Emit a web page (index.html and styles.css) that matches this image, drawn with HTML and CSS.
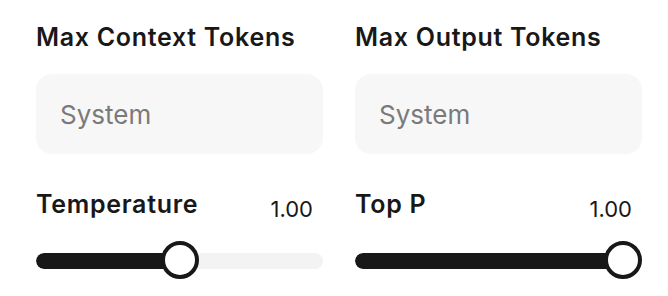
FILE: index.html
```html
<!DOCTYPE html>
<html lang="en">
<head>
    <meta charset="UTF-8">
    <meta name="viewport" content="width=device-width, initial-scale=1.0">
    <title>Model Settings</title>
    <link rel="stylesheet" href="styles.css">
</head>
<body>
    <div class="settings">
        <div class="field">
            <label class="field-label" for="max-context">Max Context Tokens</label>
            <input id="max-context" class="text-input" type="text" placeholder="System">
        </div>
        <div class="field">
            <label class="field-label" for="max-output">Max Output Tokens</label>
            <input id="max-output" class="text-input" type="text" placeholder="System">
        </div>

        <div class="field">
            <div class="slider-head">
                <span class="field-label">Temperature</span>
                <span class="slider-value">1.00</span>
            </div>
            <div class="slider">
                <div class="slider-track">
                    <div class="slider-fill" style="width: calc((100% - 38px) * 0.5 + 19px)"></div>
                </div>
                <div class="slider-thumb" style="left: calc((100% - 38px) * 0.5)"></div>
            </div>
        </div>
        <div class="field">
            <div class="slider-head">
                <span class="field-label">Top P</span>
                <span class="slider-value">1.00</span>
            </div>
            <div class="slider">
                <div class="slider-track">
                    <div class="slider-fill" style="width: calc((100% - 38px) * 1 + 19px)"></div>
                </div>
                <div class="slider-thumb" style="left: calc((100% - 38px) * 1)"></div>
            </div>
        </div>
    </div>
</body>
</html>
```

FILE: styles.css
```css
body {
    margin: 0;
    font-family: Inter, "Noto Sans", sans-serif;
    color: #181818;
    background: #fff;
}
.settings {
    display: grid;
    grid-template-columns: 287px 287px;
    column-gap: 32px;
    row-gap: 36px;
    padding: 23px 0 0 36px;
}
.field {
    display: flex;
    flex-direction: column;
}
.field-label {
    display: block;
    font-size: 25px;
    line-height: 29px;
    font-weight: 600;
    letter-spacing: 0.7px;
}
.text-input {
    margin-top: 22px;
    height: 80px;
    box-sizing: border-box;
    border: none;
    border-radius: 16px;
    background: #f7f7f7;
    padding: 0 24px;
    font-family: inherit;
    font-size: 26px;
    color: #181818;
    outline: none;
}
.text-input::placeholder {
    color: #7a7a7a;
}
.slider-head {
    display: flex;
    justify-content: space-between;
    align-items: flex-start;
}
.slider-value {
    margin-top: 6px;
    padding-right: 10px;
    font-size: 22px;
    line-height: 27px;
    font-weight: 400;
}
.slider {
    position: relative;
    height: 38px;
    margin-top: 18px;
}
.slider-track {
    position: relative;
    top: 12px;
    height: 16px;
    border-radius: 8px;
    background: #f3f3f3;
    overflow: hidden;
}
.slider-fill {
    height: 100%;
    background: #181818;
    border-radius: 8px;
}
.slider-thumb {
    position: absolute;
    top: 0;
    width: 38px;
    height: 38px;
    box-sizing: border-box;
    border: 4px solid #181818;
    border-radius: 50%;
    background: #fff;
}
```
